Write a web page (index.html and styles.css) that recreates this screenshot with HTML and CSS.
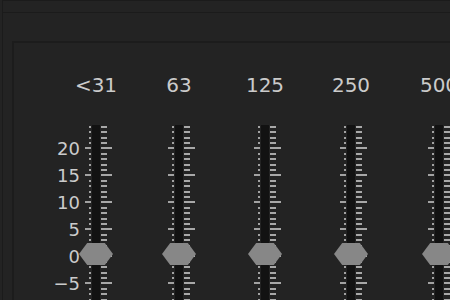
FILE: index.html
```html
<!DOCTYPE html>
<html lang="en">

<head>
    <meta charset="UTF-8">
    <title>Equalizer</title>
    <link rel="stylesheet" href="styles.css">
</head>

<body>
    <div class="window">
        <div class="toolbar"></div>

        <div class="panel">
            <div class="eq">
                <div></div>
                <div class="freq"><span>&lt;31</span></div>
                <div class="freq"><span>63</span></div>
                <div class="freq"><span>125</span></div>
                <div class="freq"><span>250</span></div>
                <div class="freq"><span>500</span></div>

                <div class="axis">
                    <span>20</span>
                    <span>15</span>
                    <span>10</span>
                    <span>5</span>
                    <span>0</span>
                    <span>&minus;5</span>
                </div>
                <div class="slider">
                    <div class="scale-l"></div>
                    <div class="track"></div>
                    <div class="scale-r"></div>
                    <span class="thumb"></span>
                </div>
                <div class="slider">
                    <div class="scale-l"></div>
                    <div class="track"></div>
                    <div class="scale-r"></div>
                    <span class="thumb"></span>
                </div>
                <div class="slider">
                    <div class="scale-l"></div>
                    <div class="track"></div>
                    <div class="scale-r"></div>
                    <span class="thumb"></span>
                </div>
                <div class="slider">
                    <div class="scale-l"></div>
                    <div class="track"></div>
                    <div class="scale-r"></div>
                    <span class="thumb"></span>
                </div>
                <div class="slider">
                    <div class="scale-l"></div>
                    <div class="track"></div>
                    <div class="scale-r"></div>
                    <span class="thumb"></span>
                </div>
            </div>
        </div>
    </div>
</body>

</html>
```

FILE: styles.css
```css
body {
    margin: 0;
    background: #232323;
    font-family: "DejaVu Sans", sans-serif;
    color: #cbcbcb;
    height: 300px;
    overflow: hidden;
}

.window {
    height: 300px;
    margin-left: 2px;
    border-left: 1px solid #1b1b1b;
    border-top: 1px solid #1b1b1b;
    overflow: hidden;
}

.toolbar {
    height: 11px;
    border-bottom: 1px solid #1b1b1b;
}

.panel {
    margin-top: 28px;
    margin-left: 9px;
    height: 300px;
    border-top: 2px solid #1c1c1c;
    border-left: 2px solid #1c1c1c;
    padding-top: 30px;
}

.eq {
    display: grid;
    grid-template-columns: 71px 83px 86px 86px 88px 88px;
    grid-template-rows: 24px auto;
    row-gap: 28px;
}

.freq {
    width: 22px;
    display: flex;
    justify-content: center;
    white-space: nowrap;
    font-size: 20px;
    line-height: 24px;
}

.axis {
    display: flex;
    flex-direction: column;
    align-items: flex-end;
    padding-top: 10px;
    padding-right: 5px;
    font-size: 18px;
    line-height: 27px;
}

.slider {
    position: relative;
    display: flex;
    height: 200px;
}

.scale-l {
    width: 6px;
    margin-right: 1px;
    background:
        repeating-linear-gradient(to bottom, transparent 0 1px, #a2a2a2 1px 2.8px, transparent 2.8px 5.4px) right top / 2px 100% no-repeat,
        repeating-linear-gradient(to bottom, transparent 0 22.4px, #a2a2a2 22.4px 24.2px, transparent 24.2px 27px);
}

.track {
    width: 8px;
    background: #121212;
}

.scale-r {
    width: 11px;
    margin-left: 1px;
    background:
        repeating-linear-gradient(to bottom, transparent 0 1px, #a8a8a8 1px 2.8px, transparent 2.8px 5.4px) left top / 6px 100% no-repeat,
        repeating-linear-gradient(to bottom, transparent 0 22.4px, #a8a8a8 22.4px 24.2px, transparent 24.2px 27px);
}

.thumb {
    position: absolute;
    left: -6px;
    top: 118px;
    width: 34px;
    height: 22px;
    background: #878787;
    clip-path: polygon(0 50%, 24% 0, 76% 0, 100% 50%, 76% 100%, 24% 100%);
}
```
